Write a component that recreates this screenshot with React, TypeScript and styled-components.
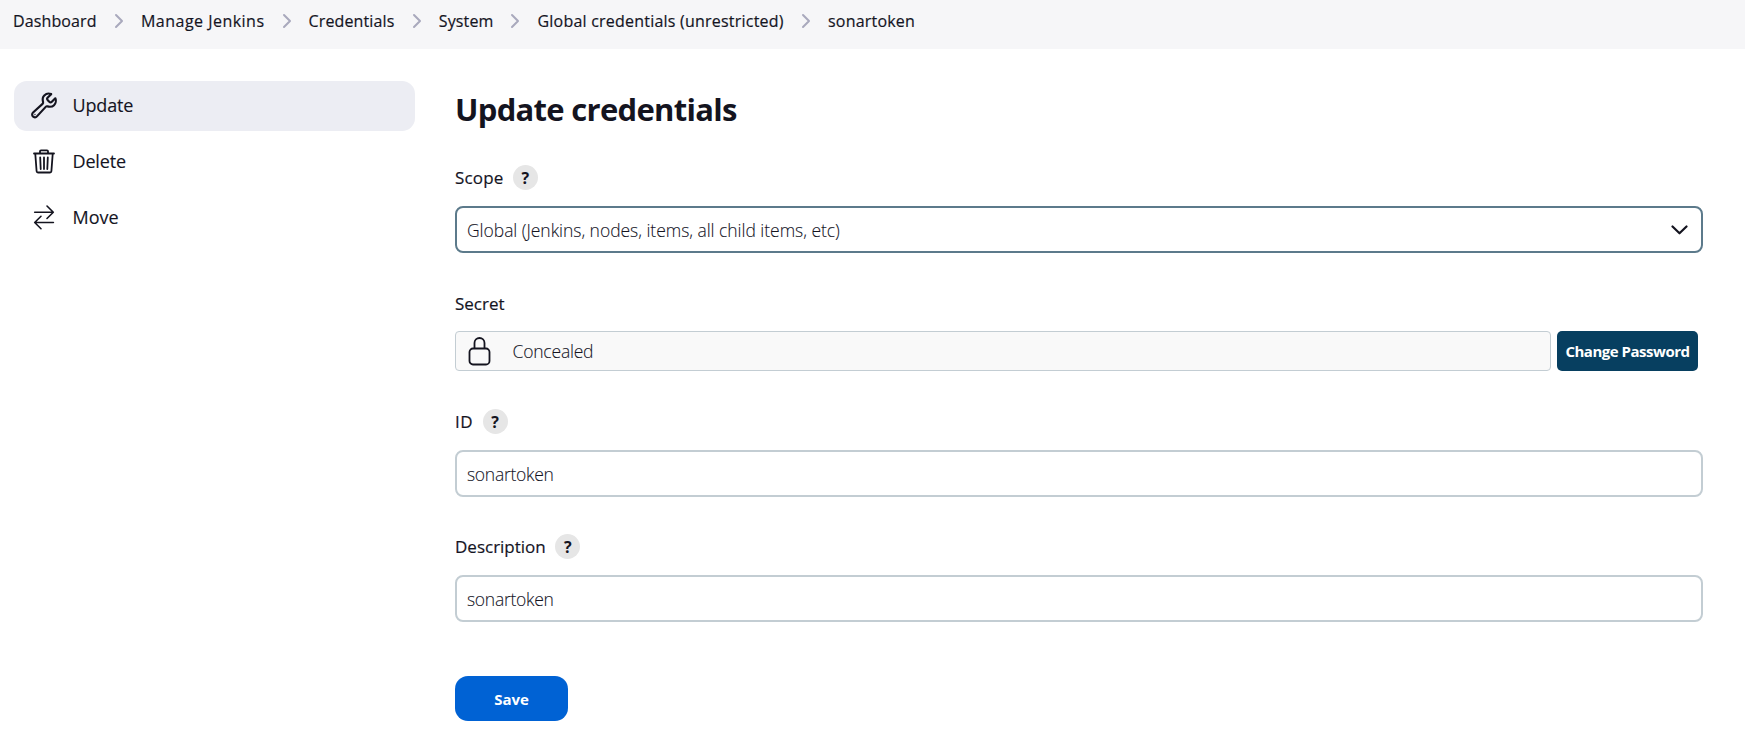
import React from "react";
import styled, { createGlobalStyle } from "styled-components";

const ink = "#14141f";

const GlobalStyle = createGlobalStyle`
  * { box-sizing: border-box; }
  body {
    margin: 0;
    background: #fff;
    color: ${ink};
    font-family: "Segoe UI", "Open Sans", "Noto Sans", sans-serif;
    font-size: 17px;
  }
`;

const Breadcrumbs = styled.nav`
  display: flex;
  align-items: flex-start;
  height: 49px;
  padding: 9px 0 0 13px;
  background: #f6f6f8;
`;

const Crumb = styled.a<{ $width: number; $spacing: number }>`
  flex: none;
  width: ${(p) => p.$width}px;
  font-size: 16px;
  font-weight: 500;
  line-height: 24px;
  letter-spacing: ${(p) => p.$spacing}px;
  -webkit-text-stroke: 0.18px ${ink};
  white-space: nowrap;
`;

const CrumbArrow = styled.svg`
  flex: none;
  width: 10px;
  height: 16px;
  margin: 4px 17px 0;
  fill: none;
  stroke: #a9a9bd;
  stroke-width: 2;
  stroke-linecap: round;
  stroke-linejoin: round;
`;

const Page = styled.div`
  display: grid;
  grid-template-columns: 401px 1248px;
  column-gap: 40px;
  padding: 32px 0 0 14px;
`;

const Tasks = styled.aside`
  display: flex;
  flex-direction: column;
  gap: 6px;
`;

const Task = styled.a<{ $active?: boolean; $spacing: number }>`
  display: flex;
  align-items: center;
  height: 50px;
  padding: 0 0 2px 16px;
  gap: 14.5px;
  border-radius: 13px;
  background: ${(p) => (p.$active ? "#ecedf3" : "transparent")};
  font-size: 18px;
  font-weight: 500;
  line-height: 24px;
  letter-spacing: ${(p) => p.$spacing}px;
  -webkit-text-stroke: 0.12px ${ink};
`;

const TaskIcon = styled.svg`
  width: 28px;
  height: 28px;
  flex: none;
  fill: none;
  stroke: ${ink};
  stroke-linecap: round;
  stroke-linejoin: round;
`;

const Title = styled.h1`
  margin: 7px 0 35px;
  font-size: 31px;
  font-weight: 700;
  line-height: 42px;
  letter-spacing: -0.7px;
`;

const Field = styled.div<{ $gap?: number }>`
  margin-bottom: ${(p) => p.$gap ?? 37}px;
`;

const Label = styled.div<{ $spacing: number; $drop?: number }>`
  display: flex;
  align-items: center;
  gap: 9.5px;
  height: 25px;
  margin-bottom: 16px;
  padding-top: ${(p) => p.$drop ?? 0}px;
  font-size: 17px;
  font-weight: 500;
  letter-spacing: ${(p) => p.$spacing}px;
  -webkit-text-stroke: 0.18px ${ink};
`;

const Help = styled.span`
  display: flex;
  align-items: center;
  justify-content: center;
  width: 25px;
  height: 25px;
  border-radius: 50%;
  background: #e6e6e6;
  font-size: 16px;
  font-weight: 700;
  letter-spacing: 0;
  -webkit-text-stroke: 0;
`;

const Control = styled.div<{ $focus?: boolean }>`
  display: flex;
  align-items: center;
  justify-content: space-between;
  height: 47px;
  padding: 0 13px 0 10px;
  border: 2px solid ${(p) => (p.$focus ? "#5c7a8b" : "#c3cdd3")};
  border-radius: 8px;
`;

const Value = styled.span<{ $spacing: number }>`
  font-size: 17.5px;
  font-weight: 300;
  line-height: 24px;
  letter-spacing: ${(p) => p.$spacing}px;
  -webkit-text-stroke: 0.1px ${ink};
`;

const SelectArrow = styled.svg`
  width: 17px;
  height: 10px;
  fill: none;
  stroke: ${ink};
  stroke-width: 2.2;
  stroke-linecap: round;
  stroke-linejoin: round;
`;

const SecretRow = styled.div`
  display: flex;
  gap: 6px;
  height: 40px;
`;

const SecretBox = styled.div`
  display: flex;
  align-items: center;
  gap: 21.5px;
  width: 1096px;
  padding-left: 12px;
  border: 1px solid #c3cdd3;
  border-radius: 4px;
  background: #f9f9f9;
`;

const Lock = styled.svg`
  width: 23px;
  height: 30px;
  fill: none;
  stroke: ${ink};
  stroke-width: 1.8;
`;

const ChangeButton = styled.button`
  width: 141px;
  padding: 0;
  border: 0;
  border-radius: 5px;
  background: #073f60;
  color: #fff;
  font-family: inherit;
  font-size: 15px;
  font-weight: 700;
  letter-spacing: -0.48px;
  white-space: nowrap;
`;

const SaveButton = styled.button`
  width: 113px;
  height: 45px;
  margin-top: 17px;
  padding: 0;
  border: 0;
  border-radius: 13px;
  background: #0062d4;
  color: #fff;
  font-family: inherit;
  font-size: 15px;
  font-weight: 700;
  letter-spacing: -0.1px;
`;

const crumbs = [
  { text: "Dashboard", width: 84, spacing: 0.12 },
  { text: "Manage Jenkins", width: 123.5, spacing: 0.48 },
  { text: "Credentials", width: 86.3, spacing: 0.14 },
  { text: "System", width: 54.7, spacing: 0.12 },
  { text: "Global credentials (unrestricted)", width: 246.5, spacing: 0.22 },
  { text: "sonartoken", width: 88, spacing: 0.2 },
];

export default function App() {
  return (
    <>
      <GlobalStyle />
      <Breadcrumbs>
        {crumbs.map((c, i) => (
          <React.Fragment key={c.text}>
            {i > 0 && (
              <CrumbArrow viewBox="0 0 10 16">
                <path d="M2 2l6 6-6 6" />
              </CrumbArrow>
            )}
            <Crumb $width={c.width} $spacing={c.spacing}>{c.text}</Crumb>
          </React.Fragment>
        ))}
      </Breadcrumbs>
      <Page>
        <Tasks>
          <Task $active $spacing={-0.15}>
            <TaskIcon viewBox="10 2 492 492" strokeWidth="38">
              <path d="M393.87 190a32.100 32.100 0 01-45.250 0l-26.570-26.570a32.090 32.090 0 010-45.260L382.190 58a1 1 0 00-.3-1.640c-38.820-16.640-89.150-8.160-121.110 23.570-30.580 30.350-32.320 76-21.120 115.840a31.930 31.930 0 01-9.060 32.080L64 380a48.170 48.170 0 1068 68l153.860-167a31.930 31.930 0 0131.600-9.130c39.540 10.590 84.540 8.600 114.720-21.190 32.490-32 39.500-88.560 23.750-120.930a1 1 0 00-1.600-.26z" />
              <circle cx="96" cy="416" r="4" strokeWidth="20" />
            </TaskIcon>
            Update
          </Task>
          <Task $spacing={-0.15}>
            <TaskIcon viewBox="0 0 28 28" strokeWidth="1.8">
              <path d="M5.300 7l1.300 17.200q.1 1.300 1.400 1.300h12q1.300 0 1.400-1.300L22.700 7M4 6.500h20M10 6.200V4.300q0-1 1-1h6q1 0 1 1v1.900M10.200 10.500l.5 11.500M14 10.500V22M17.800 10.500L17.300 22" />
            </TaskIcon>
            Delete
          </Task>
          <Task $spacing={0}>
            <TaskIcon viewBox="0 0 28 28" strokeWidth="1.6">
              <path d="M17 3l6.300 6.300L17 15.500M22.800 9.300H4.700M11 13.300L4.700 19.500l6.300 6.200M5.200 19.500h18.200" />
            </TaskIcon>
            Move
          </Task>
        </Tasks>
        <main>
          <Title>Update credentials</Title>
          <Field>
            <Label $spacing={0.15}>Scope<Help>?</Help></Label>
            <Control $focus>
              <Value $spacing={-0.04}>Global (Jenkins, nodes, items, all child items, etc)</Value>
              <SelectArrow viewBox="0 0 17 10"><path d="M1.500 1.500l7 6.800 7-6.800" /></SelectArrow>
            </Control>
          </Field>
          <Field $gap={38}>
            <Label $spacing={0} $drop={2}>Secret</Label>
            <SecretRow>
              <SecretBox>
                <Lock viewBox="0 0 23 30">
                  <rect x="1.500" y="12.500" width="20" height="16" rx="3.500" />
                  <path d="M6.500 12.500V7a5 5 0 0110 0v5.500" />
                </Lock>
                <Value $spacing={-0.2}>Concealed</Value>
              </SecretBox>
              <ChangeButton>Change Password</ChangeButton>
            </SecretRow>
          </Field>
          <Field>
            <Label $spacing={0.5}>ID<Help>?</Help></Label>
            <Control><Value $spacing={-0.28}>sonartoken</Value></Control>
          </Field>
          <Field>
            <Label $spacing={0}>Description<Help>?</Help></Label>
            <Control><Value $spacing={-0.28}>sonartoken</Value></Control>
          </Field>
          <SaveButton>Save</SaveButton>
        </main>
      </Page>
    </>
  );
}
